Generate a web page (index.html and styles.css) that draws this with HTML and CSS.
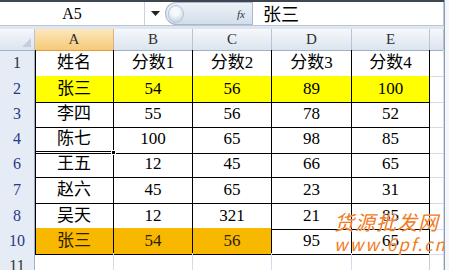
FILE: index.html
```html
<!DOCTYPE html>
<html lang="zh-CN">
<head>
    <meta charset="UTF-8">
    <title>成绩表</title>
    <link rel="stylesheet" href="styles.css">
</head>
<body>
    <div class="sheet">
        <div class="formula-bar">
            <div class="name-box">A5</div>
            <div class="dropdown">
                <svg width="9" height="6" viewBox="0 0 9 6"><path d="M0 0 H9 L4.5 5 Z" fill="#222"/></svg>
            </div>
            <div class="fx-pill"><span class="knob"></span><span class="fx">fx</span></div>
            <div class="formula-text">张三</div>
        </div>
        <div class="bar-gap"></div>

        <div class="row head">
            <div class="corner"></div>
            <div class="col-head active">A</div>
            <div class="col-head">B</div>
            <div class="col-head">C</div>
            <div class="col-head">D</div>
            <div class="col-head">E</div>
            <div class="col-head"></div>
        </div>

        <div class="row tall first">
            <div class="row-head plain">1</div>
            <div class="cell">姓名</div><div class="cell">分数1</div><div class="cell">分数2</div><div class="cell">分数3</div><div class="cell">分数4</div>
            <div class="cell empty"></div>
        </div>
        <div class="row">
            <div class="row-head">2</div>
            <div class="cell yellow">张三</div><div class="cell yellow">54</div><div class="cell yellow">56</div><div class="cell yellow">89</div><div class="cell yellow">100</div>
            <div class="cell empty"></div>
        </div>
        <div class="row">
            <div class="row-head">3</div>
            <div class="cell">李四</div><div class="cell">55</div><div class="cell">56</div><div class="cell">78</div><div class="cell">52</div>
            <div class="cell empty"></div>
        </div>
        <div class="row">
            <div class="row-head selected">4</div>
            <div class="cell current">陈七</div><div class="cell">100</div><div class="cell">65</div><div class="cell">98</div><div class="cell">85</div>
            <div class="cell empty"></div>
        </div>
        <div class="row tall">
            <div class="row-head">6</div>
            <div class="cell">王五</div><div class="cell">12</div><div class="cell">45</div><div class="cell">66</div><div class="cell">65</div>
            <div class="cell empty"></div>
        </div>
        <div class="row tall">
            <div class="row-head">7</div>
            <div class="cell">赵六</div><div class="cell">45</div><div class="cell">65</div><div class="cell">23</div><div class="cell">31</div>
            <div class="cell empty"></div>
        </div>
        <div class="row">
            <div class="row-head">8</div>
            <div class="cell">吴天</div><div class="cell">12</div><div class="cell">321</div><div class="cell">21</div><div class="cell">85</div>
            <div class="cell empty"></div>
        </div>
        <div class="row">
            <div class="row-head">10</div>
            <div class="cell orange">张三</div><div class="cell orange">54</div><div class="cell orange">56</div><div class="cell">95</div><div class="cell">65</div>
            <div class="cell empty"></div>
        </div>
        <div class="row last">
            <div class="row-head plain">11</div>
            <div class="cell empty"></div><div class="cell empty"></div><div class="cell empty"></div><div class="cell empty"></div><div class="cell empty"></div><div class="cell empty"></div>
        </div>

        <!-- site watermark stamped over the picture -->
        <div class="watermark">
            <div class="wm-name">货源批发网</div>
            <div class="wm-url">www.6pf.cn</div>
        </div>
    </div>
</body>
</html>
```

FILE: styles.css
```css
body {
    margin: 0;
    background-color: #f4f6f9;
    font-family: "Liberation Serif", "Noto Sans CJK SC", serif;
    color: #000;
}
.sheet {
    position: relative;
    width: 445px;
    height: 270px;
    overflow: hidden;
    background-color: #fff;
    border-right: 1px solid #8d9db3;
    box-sizing: border-box;
}

/* formula bar */
.formula-bar {
    display: flex;
    height: 26px;
    border-top: 2px solid #3e4652;
    border-bottom: 1px solid #b9c6d8;
    box-sizing: border-box;
    background-color: #fff;
}
.name-box {
    width: 145px;
    text-align: center;
    font-size: 16px;
    line-height: 23px;
    border-right: 1px solid #c9d3e0;
    box-sizing: border-box;
}
.dropdown {
    width: 20px;
    display: flex;
    align-items: center;
    justify-content: center;
    background-color: #fff;
}
.fx-pill {
    width: 87px;
    display: flex;
    align-items: center;
    justify-content: space-between;
    padding-right: 7px;
    box-sizing: border-box;
    border-radius: 12px 0 0 12px;
    background: linear-gradient(#eef2f8, #d3deec);
    border: 1px solid #a9b9cf;
    border-right: none;
}
.knob {
    width: 16px;
    height: 18px;
    margin-left: 2px;
    border-radius: 50%;
    background: radial-gradient(circle at 45% 35%, #f6f8fb 30%, #cdd8e6 75%);
    border: 1px solid #b7c5d8;
    box-sizing: border-box;
}
.fx {
    font-style: italic;
    font-size: 11px;
    color: #333;
}
.formula-text {
    flex: 1;
    padding-left: 10px;
    font-family: "Noto Sans CJK SC", sans-serif;
    font-size: 18px;
    line-height: 22px;
    border-left: 1px solid #a9b9cf;
    border-right: 1px solid #b9c6d8;
}
.bar-gap {
    height: 3px;
    background-color: #dfe6ef;
}

/* grid rows */
.row {
    display: grid;
    grid-template-columns: 35px 79px 79px 79px 80px 78px 14px;
    height: 25px;
}
.row.tall {
    height: 26px;
}
.row.head {
    height: 21px;
}
.row.last {
    height: 17px;
}
.corner, .col-head {
    background: linear-gradient(#f5f8fc, #dce4ee);
    border-right: 1px solid #b6c4d6;
    border-bottom: 1px solid #9eb1c8;
    box-sizing: border-box;
    text-align: center;
    font-size: 15px;
    line-height: 21px;
    color: #2f2f2f;
}
.corner {
    position: relative;
}
.corner::after {
    content: "";
    position: absolute;
    right: 3px;
    bottom: 3px;
    border-left: 9px solid transparent;
    border-bottom: 9px solid #c3cfdd;
}
.col-head.active {
    background: linear-gradient(#fce8bd, #f6c978);
    border-bottom-color: #e29b3d;
    border-right-color: #d7b27a;
}
.row-head {
    background-color: #e6ecf5;
    border-right: 1px solid #9eb1c8;
    border-bottom: 1px solid #c2cedd;
    box-sizing: border-box;
    text-align: center;
    font-size: 16px;
    line-height: 26px;
    color: #263a86;
}
.row-head.plain {
    color: #333;
}
.row-head.selected {
    border-bottom: 2px solid #e6a66a;
}
.cell {
    border-right: 1px solid #000;
    border-bottom: 1px solid #000;
    box-sizing: border-box;
    text-align: center;
    font-size: 17px;
    line-height: 25px;
    white-space: nowrap;
}
.row .cell:nth-child(2) {
    box-shadow: inset 1px 0 #000;
}
.row.first .cell {
    line-height: 26px;
}
.cell.empty {
    border-right-color: #d4dbe6;
    border-bottom-color: #d4dbe6;
}
.row .cell.empty:nth-child(2) {
    box-shadow: none;
}
.row.last .cell:nth-child(6) {
    border-right-color: #c5cfdc;
}
.cell.yellow {
    background-color: #ffff00;
}
.cell.orange {
    background-color: #f8b800;
    color: #2e2100;
}
.cell.current {
    position: relative;
    border-bottom: 3px double #000;
}
.cell.current::after {
    content: "";
    position: absolute;
    right: -3px;
    bottom: -4px;
    width: 5px;
    height: 5px;
    background-color: #000;
    border: 1px solid #fff;
    box-sizing: border-box;
}

/* watermark */
.watermark {
    position: absolute;
    left: 334px;
    top: 210px;
    color: #f27b1d;
    font-family: "Noto Sans CJK SC", sans-serif;
    font-style: italic;
    text-shadow: 0 0 1px #fff;
}
.wm-name {
    font-size: 20px;
    line-height: 24px;
    letter-spacing: 1px;
}
.wm-url {
    font-size: 17px;
    line-height: 20px;
    letter-spacing: 2px;
}
```
